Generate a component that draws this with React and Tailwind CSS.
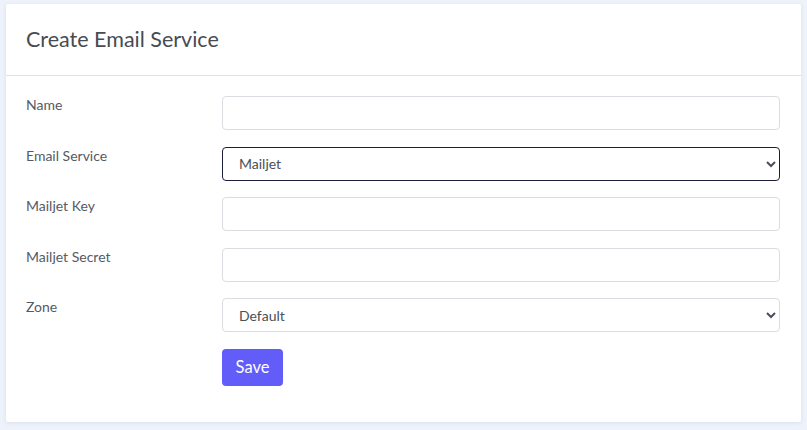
import React from "react";

const font = { fontFamily: "Lato, 'Noto Sans', sans-serif" };

function Label({ children }) {
  return <div className="w-[196px] shrink-0 pt-0 text-[14px] leading-[18px] text-[#555a64]">{children}</div>;
}

function TextInput() {
  return (
    <input
      type="text"
      className="h-[34px] w-[558px] rounded-[4px] border border-[#dcdde2] bg-white px-4 text-[14px] text-[#495057] outline-none"
    />
  );
}

function Select({ value, focused }) {
  return (
    <select
      defaultValue={value}
      className={
        "h-[34px] w-[558px] rounded-[4px] border bg-white pl-3 pr-2 text-[14px] text-[#495057] outline-none " +
        (focused ? "border-[#1b1d3a]" : "border-[#dcdde2]")
      }
      style={font}
    >
      <option value={value}>{value}</option>
    </select>
  );
}

export default function App() {
  return (
    <div className="h-[430px] w-[807px] bg-[#eef2fa] pl-[6px] pt-[4px]" style={font}>
      <div className="w-[795px] rounded-[2px] bg-white shadow-[0_1px_4px_rgba(120,140,180,0.18)]">
        <div className="flex h-[72px] items-center border-b border-[#dfe1e5] px-5">
          <h1 className="text-[21.5px] text-[#474b52]">Create Email Service</h1>
        </div>
        <div className="flex flex-col gap-[16.5px] pb-[36px] pl-5 pr-[21px] pt-[20px]">
          <div className="flex">
            <Label>Name</Label>
            <TextInput />
          </div>
          <div className="flex">
            <Label>Email Service</Label>
            <Select value="Mailjet" focused />
          </div>
          <div className="flex">
            <Label>Mailjet Key</Label>
            <TextInput />
          </div>
          <div className="flex">
            <Label>Mailjet Secret</Label>
            <TextInput />
          </div>
          <div className="flex">
            <Label>Zone</Label>
            <Select value="Default" />
          </div>
          <div className="flex">
            <div className="w-[196px] shrink-0" />
            <button className="h-[37px] w-[61px] rounded-[4px] bg-[#625df9] text-[16.5px] text-white">
              Save
            </button>
          </div>
        </div>
      </div>
    </div>
  );
}
